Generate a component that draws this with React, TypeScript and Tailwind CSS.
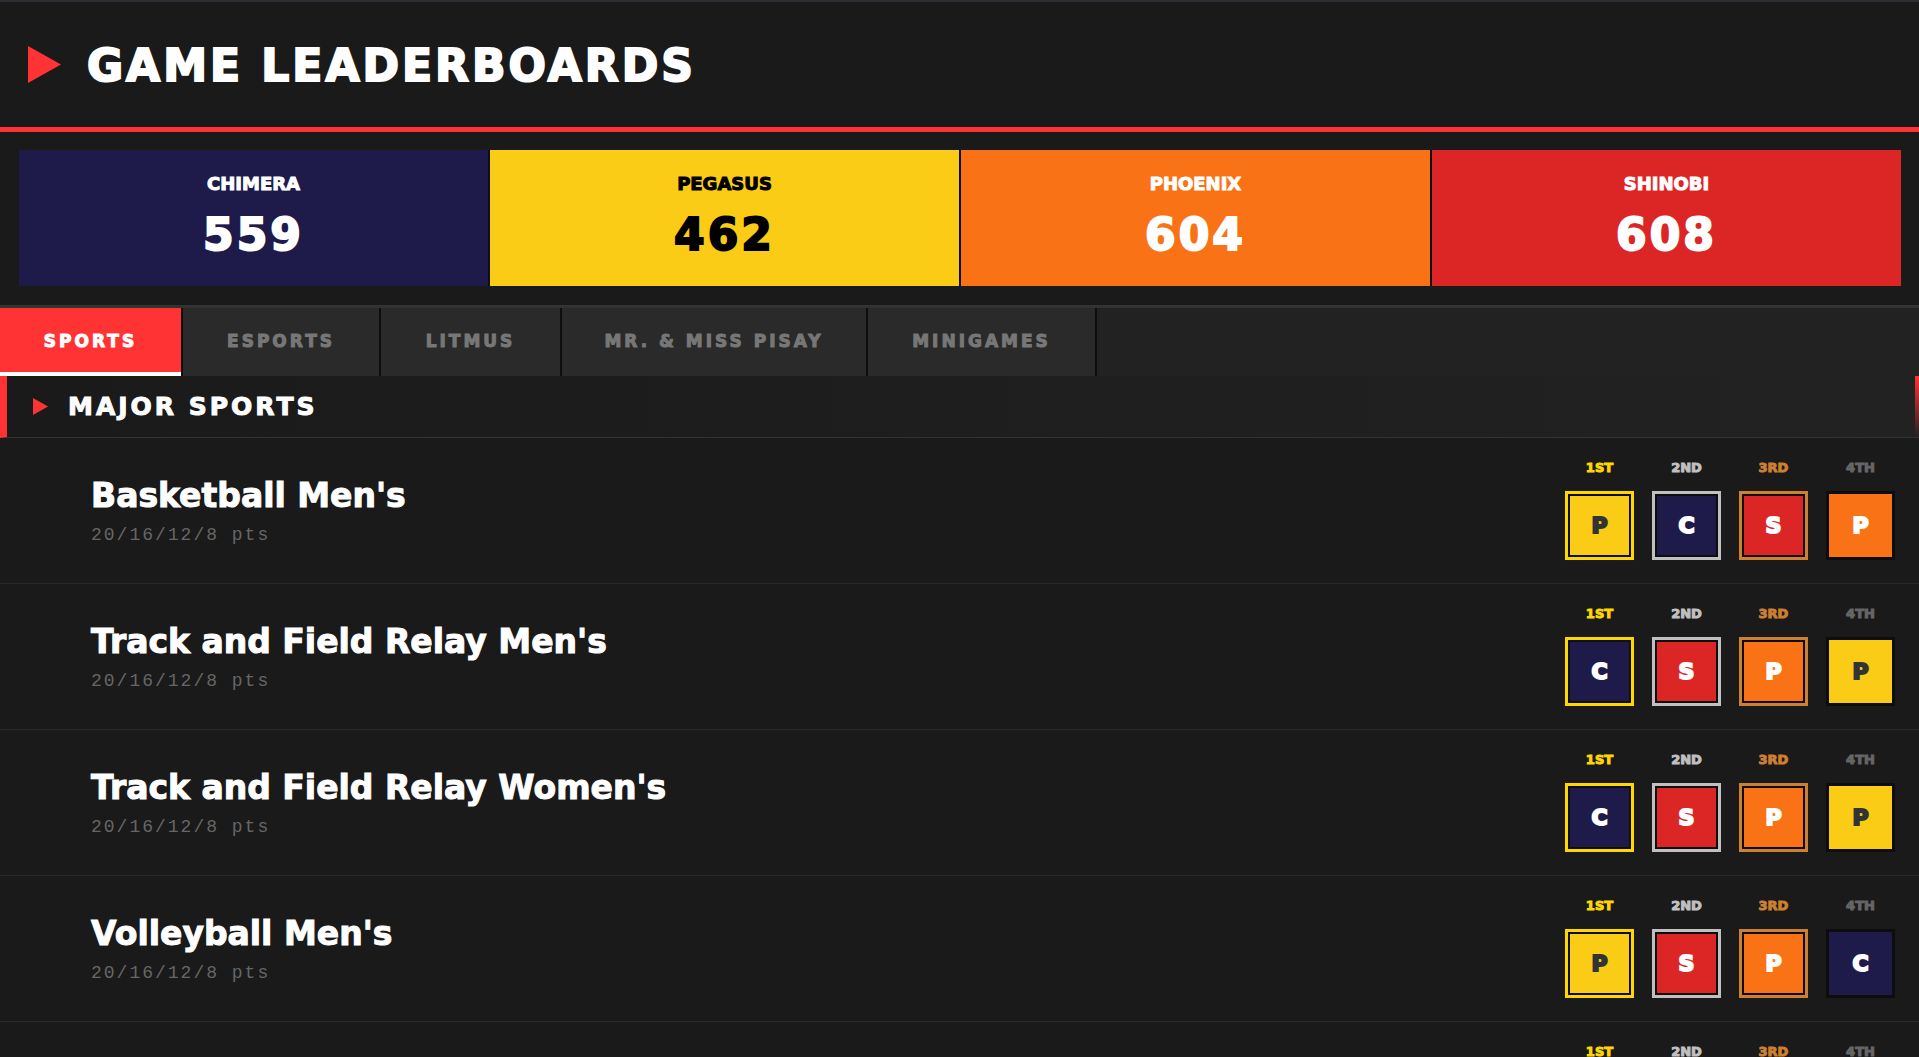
import { useState } from 'react'
import clsx from 'clsx'

const teams = {
  chimera: { name: 'Chimera', initial: 'C', box: 'bg-[#1e1b4b] text-white' },
  pegasus: { name: 'Pegasus', initial: 'P', box: 'bg-[#facc15] text-[#333333]' },
  phoenix: { name: 'Phoenix', initial: 'P', box: 'bg-[#f97316] text-white' },
  shinobi: { name: 'Shinobi', initial: 'S', box: 'bg-[#dc2626] text-white' },
}

type TeamId = keyof typeof teams

const scores = [
  { name: 'CHIMERA', score: 559, color: 'bg-[#1e1b4b] text-white' },
  { name: 'PEGASUS', score: 462, color: 'bg-[#facc15] text-black' },
  { name: 'PHOENIX', score: 604, color: 'bg-[#f97316] text-white' },
  { name: 'SHINOBI', score: 608, color: 'bg-[#dc2626] text-white' },
]

const tabs = [
  { label: 'SPORTS', width: 'min-w-[183px]' },
  { label: 'ESPORTS', width: 'min-w-[198px]' },
  { label: 'LITMUS', width: 'min-w-[181px]' },
  { label: 'MR. & MISS PISAY', width: 'min-w-[306px]' },
  { label: 'MINIGAMES', width: 'min-w-[229px]' },
]

const places = [
  { label: '1ST', text: 'text-[#ffd700]', border: 'border-[#ffd700]' },
  { label: '2ND', text: 'text-[#c0c0c0]', border: 'border-[#c0c0c0]' },
  { label: '3RD', text: 'text-[#cd7f32]', border: 'border-[#cd7f32]' },
  { label: '4TH', text: 'text-[#666666]', border: 'border-[#0d0d0d]' },
]

const events: { name: string; points: string; results: TeamId[] }[] = [
  { name: "Basketball Men's", points: '20/16/12/8 pts', results: ['pegasus', 'chimera', 'shinobi', 'phoenix'] },
  { name: "Track and Field Relay Men's", points: '20/16/12/8 pts', results: ['chimera', 'shinobi', 'phoenix', 'pegasus'] },
  { name: "Track and Field Relay Women's", points: '20/16/12/8 pts', results: ['chimera', 'shinobi', 'phoenix', 'pegasus'] },
  { name: "Volleyball Men's", points: '20/16/12/8 pts', results: ['pegasus', 'shinobi', 'phoenix', 'chimera'] },
  { name: "Volleyball Women's", points: '20/16/12/8 pts', results: ['pegasus', 'shinobi', 'phoenix', 'chimera'] },
]

function Arrow({ className }: { className: string }) {
  return (
    <svg viewBox="0 0 33 37" preserveAspectRatio="none" className={clsx('shrink-0 fill-[#ff3333]', className)} aria-hidden="true">
      <path d="M0 0 33 18.5 0 37z" />
    </svg>
  )
}

function Placement({ team, place }: { team: TeamId; place: number }) {
  const { label, text, border } = places[place]
  return (
    <div className="flex w-[69px] flex-col items-center gap-3.5">
      <span className={clsx('text-[13px] leading-[18px] font-black [-webkit-text-stroke:1px]', text)}>{label}</span>
      <div
        title={teams[team].name}
        className={clsx(
          'flex size-[69px] items-center justify-center border-3 text-[22px] font-black [-webkit-text-stroke:2px]',
          border,
          teams[team].box,
          place < 3 && 'inset-ring-2 inset-ring-[#0d0d0d]'
        )}
      >
        {teams[team].initial}
      </div>
    </div>
  )
}

export default function App() {
  const [active, setActive] = useState('SPORTS')

  return (
    <main className="h-screen overflow-y-auto border-t-2 border-[#2d2d33] bg-[#1a1a1a] font-['DejaVu_Sans',sans-serif] text-white [scrollbar-width:none]">
      {/* Header */}
      <header className="flex h-[130px] items-center gap-[26px] border-b-5 border-[#ff3333] px-7">
        <Arrow className="h-[37px] w-[33px]" />
        <h1 className="pt-0.5 text-[44px] leading-none font-black tracking-[3px] [-webkit-text-stroke:2px]">GAME LEADERBOARDS</h1>
      </header>

      {/* Team totals */}
      <section className="border-b-3 border-[#333333] pt-[18px] pr-[18px] pb-[19px] pl-[19px]">
        <div className="grid grid-cols-4 gap-0.5 bg-[#0d0d0d]">
          {scores.map((team) => (
            <div key={team.name} className={clsx('flex h-[136px] flex-col items-center pt-5 font-black', team.color)}>
              <span className="text-lg leading-7 [-webkit-text-stroke:1px]">{team.name}</span>
              <span className="mt-3 text-[44px] leading-[50px] tracking-[3px] [-webkit-text-stroke:2px]">{team.score}</span>
            </div>
          ))}
        </div>
      </section>

      {/* Categories */}
      <nav className="flex bg-[#222222]">
        {tabs.map((tab) => (
          <button
            key={tab.label}
            type="button"
            onClick={() => setActive(tab.label)}
            className={clsx(
              'h-[68px] border-r-2 border-r-[#0d0d0d] text-[17px] font-black tracking-[3px] [-webkit-text-stroke:1px]',
              tab.width,
              active === tab.label ? 'bg-[#ff3333] text-white shadow-[inset_0_-4px_0_#fff]' : 'bg-[#2a2a2a] text-[#777777]'
            )}
          >
            {tab.label}
          </button>
        ))}
      </nav>

      {/* Section title */}
      <div className="flex h-[62px] border-b border-l-7 border-b-[#333333] border-l-[#ff3333] bg-linear-to-r from-[#1a1a1a] to-[#222222]">
        <div className="flex flex-1 items-center gap-5 pl-[26px]">
          <Arrow className="h-[17px] w-[15px]" />
          <h2 className="text-[25px] font-black tracking-[3px] [-webkit-text-stroke:1px]">MAJOR SPORTS</h2>
        </div>
        <div className="w-1 bg-linear-to-b from-[#ff3333] to-transparent" />
      </div>

      {/* Events */}
      <ul>
        {events.map((event) => (
          <li key={event.name} className="flex h-[146px] items-start justify-between border-b border-[#2a2a2a] pr-6 pl-[91px]">
            <div className="pt-9">
              <h3 className="text-[33px] leading-[43px] font-black [-webkit-text-stroke:1px]">{event.name}</h3>
              <p className="font-['Liberation_Mono',monospace] text-lg leading-9 tracking-[2px] text-[#666666]">{event.points}</p>
            </div>
            <div className="flex gap-[18px] pt-[21px]">
              {event.results.map((team, i) => (
                <Placement key={i} team={team} place={i} />
              ))}
            </div>
          </li>
        ))}
      </ul>
    </main>
  )
}
